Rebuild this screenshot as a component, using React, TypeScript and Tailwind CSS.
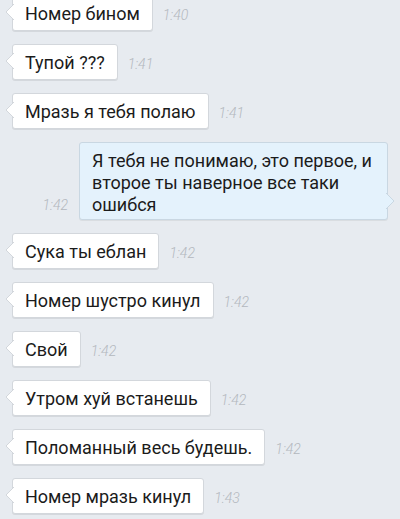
type Msg = { text: string; time: string; out?: boolean };

const messages: Msg[] = [
  { text: 'Номер бином', time: '1:40' },
  { text: 'Тупой ???', time: '1:41' },
  { text: 'Мразь я тебя полаю', time: '1:41' },
  { text: 'Я тебя не понимаю, это первое, и второе ты наверное все таки ошибся', time: '1:42', out: true },
  { text: 'Сука ты еблан', time: '1:42' },
  { text: 'Номер шустро кинул', time: '1:42' },
  { text: 'Свой', time: '1:42' },
  { text: 'Утром хуй встанешь', time: '1:42' },
  { text: 'Поломанный весь будешь.', time: '1:42' },
  { text: 'Номер мразь кинул', time: '1:43' },
];

function Tail({ out }: { out?: boolean }) {
  // little triangle sticking out of the bubble side, ~18px above the bottom
  return (
    <svg
      width="9"
      height="16"
      viewBox="0 0 9 16"
      className={out ? 'absolute right-[-8px] bottom-[10px]' : 'absolute left-[-8px] bottom-[10px]'}
    >
      {out ? (
        <>
          <path d="M0 0 L8 8 L0 16 Z" fill="#e4f2fc" />
          <path d="M0 0 L8 8 L0 16" fill="none" stroke="#c9d7e2" strokeWidth="1" />
        </>
      ) : (
        <>
          <path d="M9 0 L1 8 L9 16 Z" fill="#ffffff" />
          <path d="M9 0 L1 8 L9 16" fill="none" stroke="#d3d7dc" strokeWidth="1" />
        </>
      )}
    </svg>
  );
}

function Time({ t }: { t: string }) {
  return <span className="text-[14px] italic font-light text-[#b3b8be] leading-none">{t}</span>;
}

export default function App() {
  return (
    <div
      className="w-[400px] h-[519px] overflow-hidden bg-[#e7ebf0]"
      style={{ fontFamily: 'Roboto, "Noto Sans", sans-serif' }}
    >
      <div className="flex flex-col gap-[13px] mt-[-5px] px-[12px]">
        {messages.map((m, i) =>
          m.out ? (
            <div key={i} className="flex items-end justify-end gap-[11px]">
              <div className="pb-[3px]">
                <Time t={m.time} />
              </div>
              <div className="relative w-[309px] bg-[#e4f2fc] border border-[#c9d7e2] rounded-[3px] px-[12px] pt-[7px] pb-[3px] text-[18px] leading-[22px] text-[#1b1b1b] shadow-[0_1px_0_rgba(0,0,0,0.06)]">
                {m.text}
                <Tail out />
              </div>
            </div>
          ) : (
            <div key={i} className="flex items-center gap-[10px]">
              <div className="relative bg-white border border-[#d3d7dc] rounded-[3px] px-[12px] pt-[7px] pb-[5px] text-[18px] leading-[22px] text-[#1b1b1b] shadow-[0_1px_0_rgba(0,0,0,0.08)]">
                {m.text}
                <Tail />
              </div>
              <div className="pt-[3px]">
                <Time t={m.time} />
              </div>
            </div>
          )
        )}
      </div>
    </div>
  );
}
